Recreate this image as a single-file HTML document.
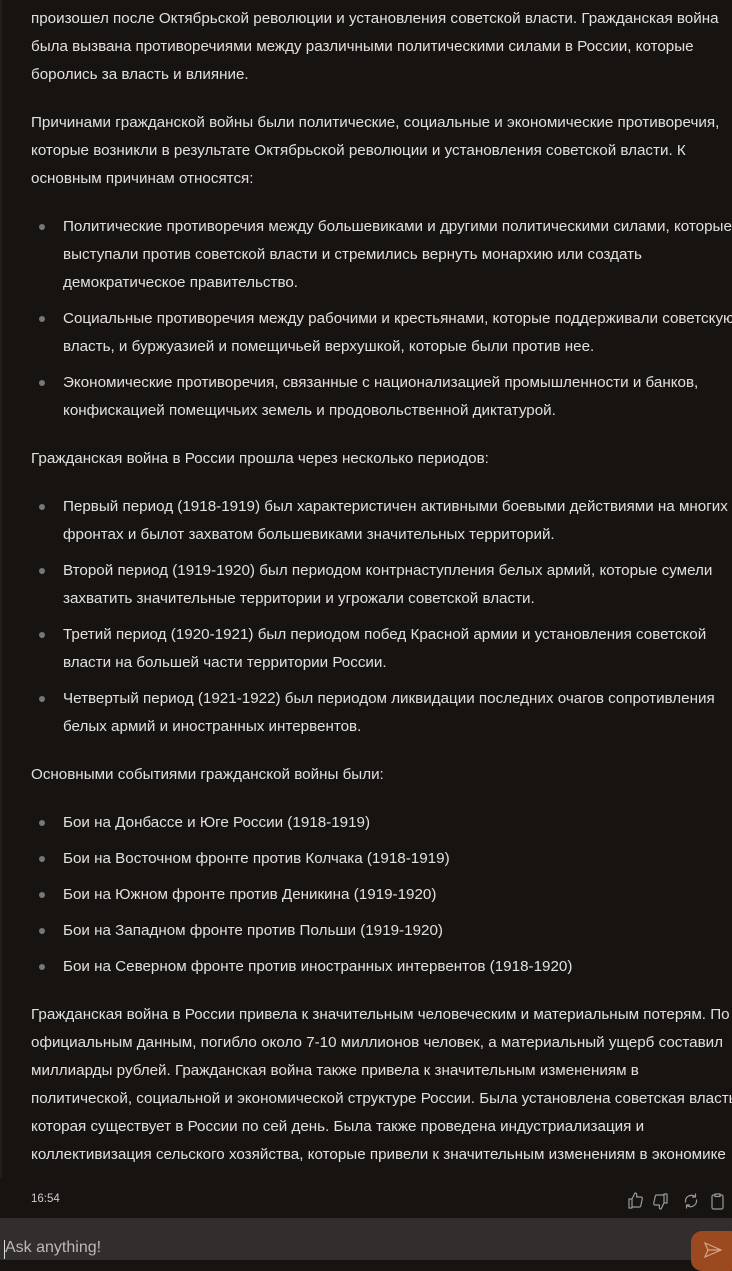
<!DOCTYPE html>
<html><head><meta charset="utf-8"><style>
*{margin:0;padding:0;box-sizing:border-box}
body{width:732px;height:1260px;background:#161311;position:relative;overflow:hidden;font-family:"Liberation Sans","DejaVu Sans",sans-serif;color:#e2e0de}
.l{position:absolute;height:28px;line-height:28px;font-size:15.2px;white-space:nowrap;left:31px;letter-spacing:0}
.i{left:63px}
.b{position:absolute;left:39px;width:6px;height:6px;border-radius:50%;background:#777}
.edge{position:absolute;left:0;top:0;width:2px;height:1218px;background:#221e1c}
.bar{position:absolute;left:0;top:1218px;width:732px;height:42px;background:#322e2d}
</style></head><body>
<div class="edge"></div>
<div class="l" style="top:5px">произошел после Октябрьской революции и установления советской власти. Гражданская война</div>
<div class="l" style="top:33px">была вызвана противоречиями между различными политическими силами в России, которые</div>
<div class="l" style="top:61px">боролись за власть и влияние.</div>
<div class="l" style="top:109px">Причинами гражданской войны были политические, социальные и экономические противоречия,</div>
<div class="l" style="top:137px">которые возникли в результате Октябрьской революции и установления советской власти. К</div>
<div class="l" style="top:165px">основным причинам относятся:</div>
<div class="b" style="top:224px"></div>
<div class="l i" style="top:213px">Политические противоречия между большевиками и другими политическими силами, которые</div>
<div class="l i" style="top:241px">выступали против советской власти и стремились вернуть монархию или создать</div>
<div class="l i" style="top:269px">демократическое правительство.</div>
<div class="b" style="top:316px"></div>
<div class="l i" style="top:305px">Социальные противоречия между рабочими и крестьянами, которые поддерживали советскую</div>
<div class="l i" style="top:333px">власть, и буржуазией и помещичьей верхушкой, которые были против нее.</div>
<div class="b" style="top:380px"></div>
<div class="l i" style="top:369px">Экономические противоречия, связанные с национализацией промышленности и банков,</div>
<div class="l i" style="top:397px">конфискацией помещичьих земель и продовольственной диктатурой.</div>
<div class="l" style="top:445px">Гражданская война в России прошла через несколько периодов:</div>
<div class="b" style="top:504px"></div>
<div class="l i" style="top:493px">Первый период (1918-1919) был характеристичен активными боевыми действиями на многих</div>
<div class="l i" style="top:521px">фронтах и былот захватом большевиками значительных территорий.</div>
<div class="b" style="top:568px"></div>
<div class="l i" style="top:557px">Второй период (1919-1920) был периодом контрнаступления белых армий, которые сумели</div>
<div class="l i" style="top:585px">захватить значительные территории и угрожали советской власти.</div>
<div class="b" style="top:632px"></div>
<div class="l i" style="top:621px">Третий период (1920-1921) был периодом побед Красной армии и установления советской</div>
<div class="l i" style="top:649px">власти на большей части территории России.</div>
<div class="b" style="top:696px"></div>
<div class="l i" style="top:685px">Четвертый период (1921-1922) был периодом ликвидации последних очагов сопротивления</div>
<div class="l i" style="top:713px">белых армий и иностранных интервентов.</div>
<div class="l" style="top:761px">Основными событиями гражданской войны были:</div>
<div class="b" style="top:820px"></div>
<div class="l i" style="top:809px">Бои на Донбассе и Юге России (1918-1919)</div>
<div class="b" style="top:856px"></div>
<div class="l i" style="top:845px">Бои на Восточном фронте против Колчака (1918-1919)</div>
<div class="b" style="top:892px"></div>
<div class="l i" style="top:881px">Бои на Южном фронте против Деникина (1919-1920)</div>
<div class="b" style="top:928px"></div>
<div class="l i" style="top:917px">Бои на Западном фронте против Польши (1919-1920)</div>
<div class="b" style="top:964px"></div>
<div class="l i" style="top:953px">Бои на Северном фронте против иностранных интервентов (1918-1920)</div>
<div class="l" style="top:1001px">Гражданская война в России привела к значительным человеческим и материальным потерям. По</div>
<div class="l" style="top:1029px">официальным данным, погибло около 7-10 миллионов человек, а материальный ущерб составил</div>
<div class="l" style="top:1057px">миллиарды рублей. Гражданская война также привела к значительным изменениям в</div>
<div class="l" style="top:1085px">политической, социальной и экономической структуре России. Была установлена советская власть,</div>
<div class="l" style="top:1113px">которая существует в России по сей день. Была также проведена индустриализация и</div>
<div class="l" style="top:1141px">коллективизация сельского хозяйства, которые привели к значительным изменениям в экономике</div>
<div style="position:absolute;top:1178px;left:0;width:732px;height:40px;background:#161311"></div>
<div style="position:absolute;left:2px;top:1178px;width:2px;height:40px;background:#161311"></div>
<div style="position:absolute;left:31px;top:1193px;font-size:11.5px;color:#cfcccb">16:54</div>
<svg style="position:absolute;left:626px;top:1190px" width="106" height="22" viewBox="0 0 106 22" fill="none" stroke="#999" stroke-width="1.2" stroke-linejoin="round" stroke-linecap="round">
<path d="M3 9h3v9H3zM6 9l3-6c2 0 2 2 1.5 4H15c1 0 1.5 1 1.2 2l-1.5 7c-.2.8-.8 1-1.5 1H6"/>
<g transform="translate(26 22) scale(1 -1)"><path d="M12 9h3v9h-3zM12 9l-3-6c-2 0-2 2-1.5 4H3c-1 0-1.5 1-1.2 2l1.5 7c.2.8.8 1 1.5 1H12"/></g>
<path d="M59.5 12a6 6 0 0 1 9.5-5.5M70.5 10a6 6 0 0 1-9.5 5.5M69.5 4v3h-3M60.5 18v-3h3"/>
<path d="M89 5h-1.5c-.8 0-1.5.7-1.5 1.5v11c0 .8.7 1.5 1.5 1.5h8c.8 0 1.5-.7 1.5-1.5v-11c0-.8-.7-1.5-1.5-1.5H94M89 4h5v2.5h-5z"/>
</svg>
<div class="bar"></div>
<div style="position:absolute;left:4px;top:1240px;width:1px;height:19px;background:#ddd"></div>
<div style="position:absolute;left:5px;top:1239px;font-size:16px;color:#bdb9b7">Ask anything!</div>
<div style="position:absolute;left:691px;top:1231px;width:50px;height:40px;border-radius:11px;background:#9b4a20"></div>
<svg style="position:absolute;left:703px;top:1241px" width="20" height="18" viewBox="0 0 20 18" fill="none" stroke="#d9a487" stroke-width="1.2"><path d="M2 2l16 7-16 7 3-7zM5 9h13"/></svg>
</body></html>
